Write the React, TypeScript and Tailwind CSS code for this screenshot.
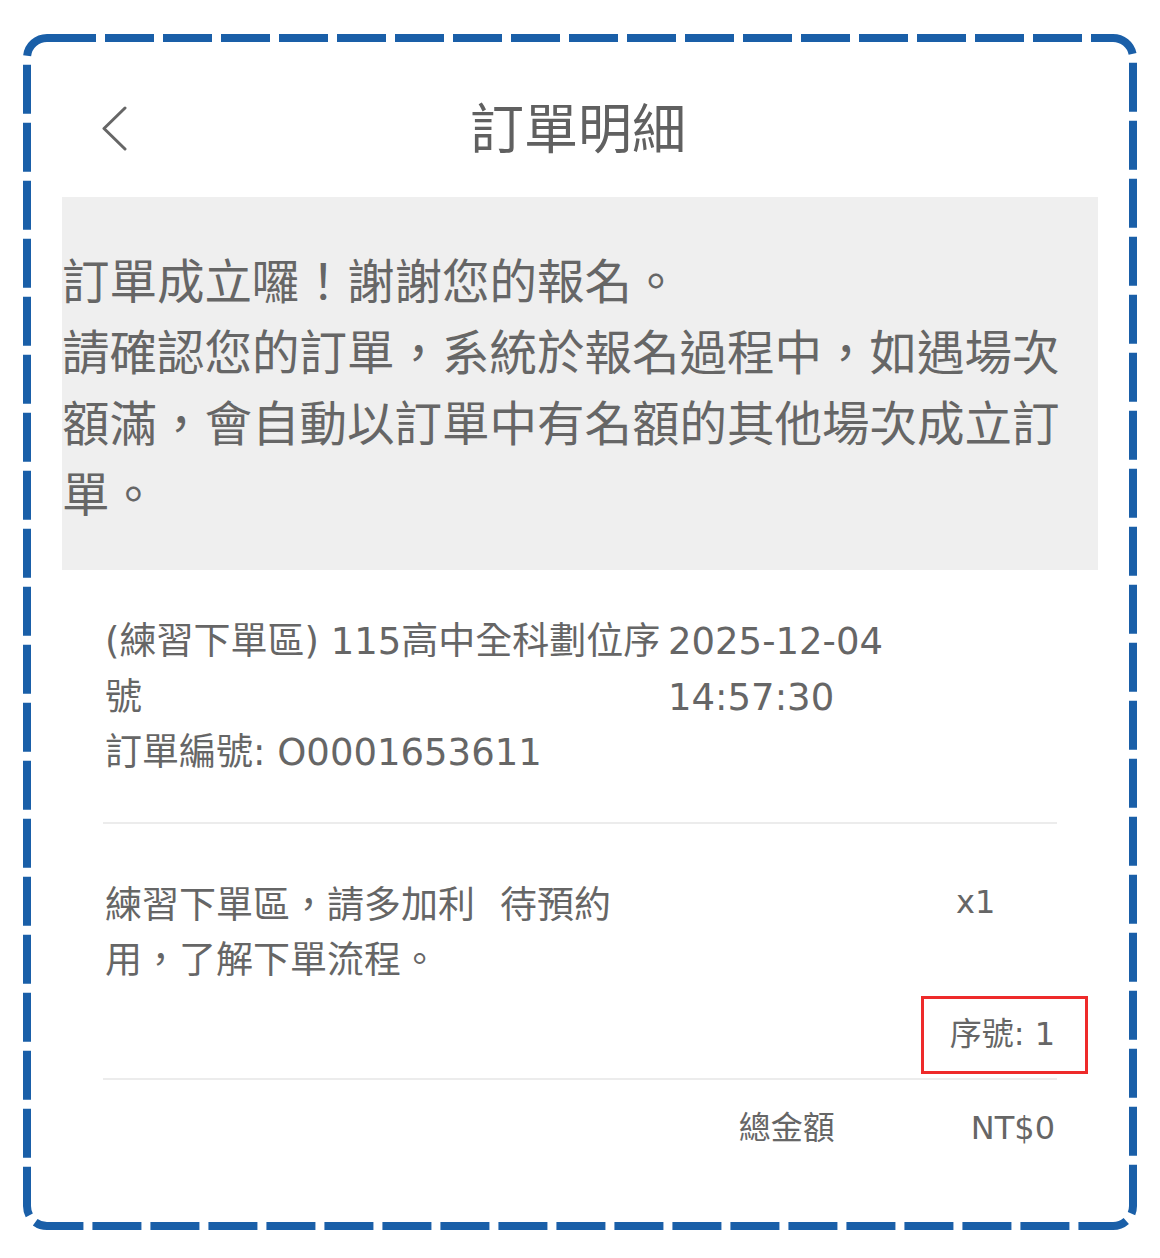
import React from 'react';

const font = "font-['DejaVu_Sans','Noto_Sans_CJK_TC',sans-serif]";

function DashedFrame() {
  return (
    <svg className="absolute inset-0 pointer-events-none" width="1114" height="1196" viewBox="0 0 1114 1196">
      <rect x="4" y="4" width="1106" height="1188" rx="20" fill="none" stroke="#1a5fa8" strokeWidth="8" strokeDasharray="49 9" />
    </svg>
  );
}

function BackIcon() {
  return (
    <svg width="28" height="46" viewBox="0 0 28 46" fill="none">
      <path d="M24 3 L3 23.5 L24 44" stroke="#666" strokeWidth="3" strokeLinecap="round" strokeLinejoin="round" />
    </svg>
  );
}

export default function App() {
  return (
    <div className={`w-[1160px] h-[1258px] bg-white pt-[34px] px-[23px] text-[#666] ${font}`}>
      <div className="relative w-[1114px] h-[1196px]">
        <DashedFrame />

        {/* header */}
        <div className="grid grid-cols-[1fr_auto_1fr] h-[163px]">
          <div className="pl-[78px] pt-[71px]">
            <BackIcon />
          </div>
          <h1 className="pt-[70px] pr-[4px] text-[54px] leading-[54px] text-[#606060]">訂單明細</h1>
          <div />
        </div>

        {/* notice */}
        <div className="mx-[39px] bg-[#efefef] pt-[50px] pb-[39px] text-[47.5px] leading-[71px]">
          <p>訂單成立囉！謝謝您的報名。</p>
          <p>請確認您的訂單，系統於報名過程中，如遇場次額滿，會自動以訂單中有名額的其他場次成立訂單。</p>
        </div>

        <div className="mx-[80px]">
          {/* order info */}
          <div className="mt-[44px] text-[37px] leading-[55.5px]">
            <div className="flex">
              <div className="w-[565px] pl-[2px]">(練習下單區) 115高中全科劃位序號</div>
              <div>
                <div>2025-12-04</div>
                <div>14:57:30</div>
              </div>
            </div>
            <div className="pl-[2px]">訂單編號: O0001653611</div>
          </div>

          <div className="mt-[41px] h-[2px] bg-[#ececec]" />

          {/* item */}
          <div className="mt-[54px] flex items-start">
            <div className="w-[397px] pl-[2px] text-[37px] leading-[55.5px]">練習下單區，請多加利用，了解下單流程。</div>
            <div className="w-[456px] text-[37px] leading-[55.5px]">待預約</div>
            <div className="text-[32px] leading-[48px]">x1</div>
          </div>

          <div className="relative mt-[21px] flex justify-end pr-[2px] text-[32px] leading-[48px]">
            <span>序號: 1</span>
            <div className="absolute right-[-31px] top-[-14px] w-[167px] h-[78px] border-[3px] border-[#ee2a2a]" />
          </div>

          <div className="mt-[20px] h-[2px] bg-[#ececec]" />

          {/* total */}
          <div className="mt-[24px] flex justify-end gap-[136px] pr-[2px] text-[32px] leading-[48px]">
            <span>總金額</span>
            <span>NT$0</span>
          </div>
        </div>
      </div>
    </div>
  );
}
